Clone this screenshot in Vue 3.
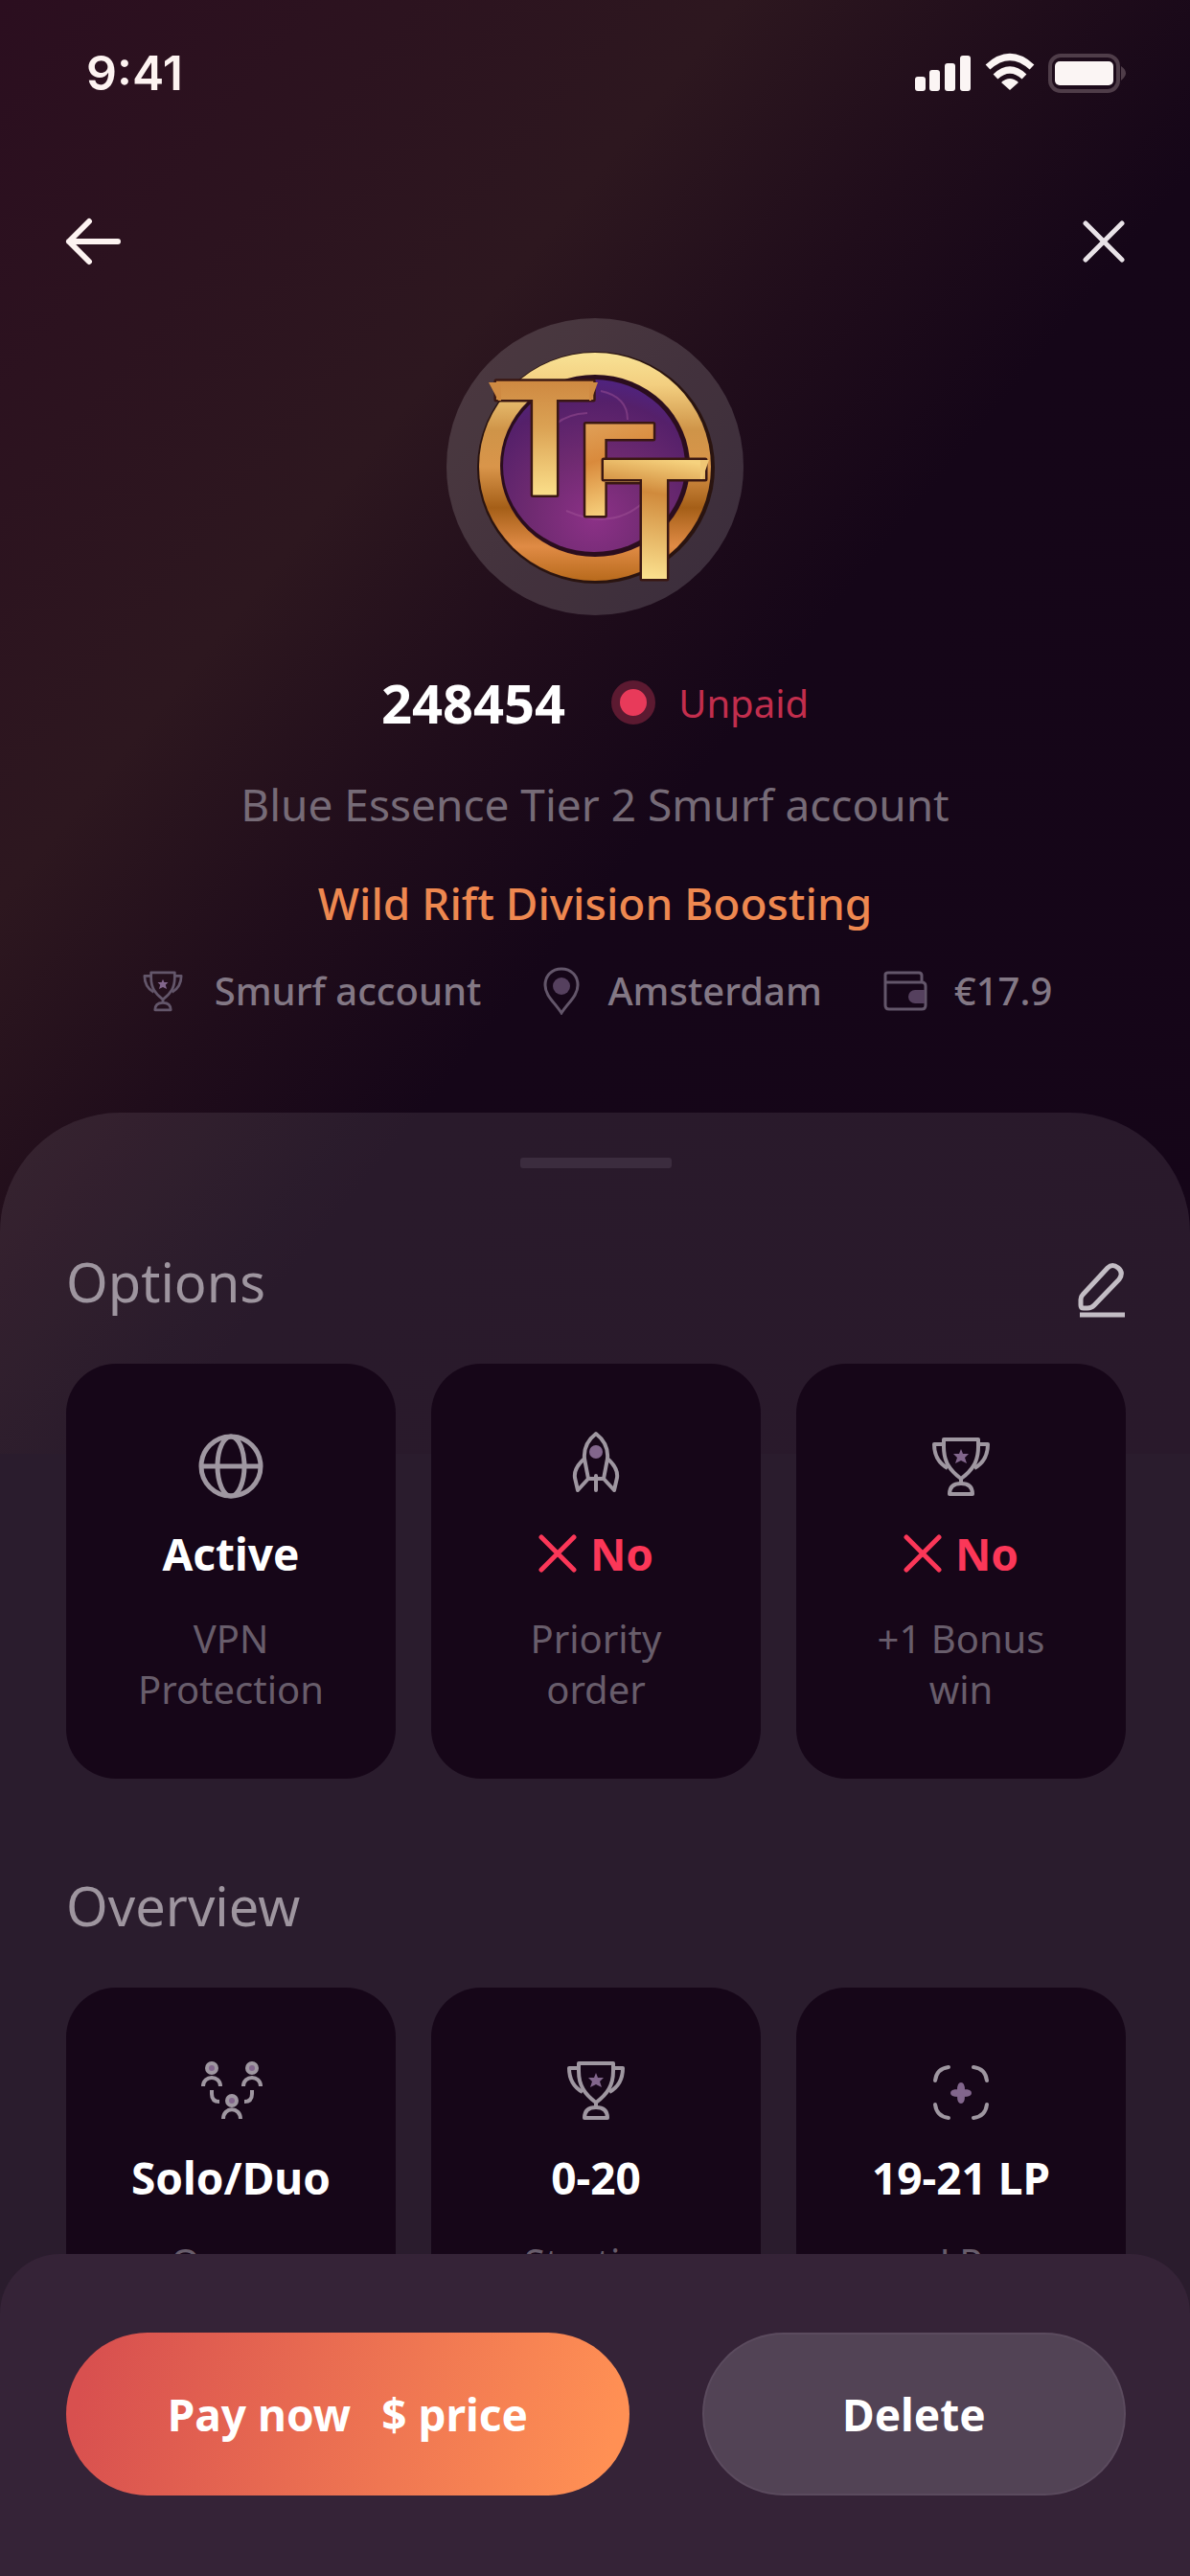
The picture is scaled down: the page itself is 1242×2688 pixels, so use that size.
<script setup>
const options = [
  { icon: 'globe', value: 'Active', label: 'VPN Protection' },
  { icon: 'rocket', value: 'No', label: 'Priority order', off: true },
  { icon: 'trophy', value: 'No', label: '+1 Bonus win', off: true },
]

const overview = [
  { icon: 'team', value: 'Solo/Duo', label: 'Queue' },
  { icon: 'trophy', value: '0-20', label: 'Starting' },
  { icon: 'target', value: '19-21 LP', label: 'LP' },
]

const sections = [
  { title: 'Options', cards: options, editable: true },
  { title: 'Overview', cards: overview },
]
</script>

<template>
  <div class="screen">
    <!-- shared icon shapes -->
    <svg class="defs" aria-hidden="true">
      <symbol id="globe" viewBox="0 0 76 76">
        <g fill="none" stroke="currentColor" stroke-width="5">
          <circle cx="38" cy="38" r="31" />
          <ellipse cx="38" cy="38" rx="14" ry="31" />
          <path d="M7 38h62" />
        </g>
      </symbol>
      <symbol id="rocket" viewBox="0 0 76 76">
        <g fill="none" stroke="currentColor" stroke-width="4" stroke-linejoin="round" stroke-linecap="round">
          <path d="M38 4C29 11 25 19 26 30l4 21h16l4-21C51 19 47 11 38 4z" />
          <path d="M26 30c-8 7-11 13-10 20l3 13 11-12" />
          <path d="M50 30c8 7 11 13 10 20l-3 13-11-12" />
          <path d="M38 48v15" />
        </g>
        <circle cx="38" cy="23" r="7" fill="#82668c" />
      </symbol>
      <symbol id="trophy" viewBox="0 0 76 76">
        <g fill="none" stroke="currentColor" stroke-width="4" stroke-linejoin="round">
          <path d="M20 10h36v8c0 15-6 24-18 33C26 42 20 33 20 18z" />
          <path d="M20 15H10c0 12 5 20 14 25" />
          <path d="M56 15h10c0 12-5 20-14 25" />
          <path d="M38 51v5" />
          <path d="M26 67c0-7 4-11 12-11s12 4 12 11z" />
        </g>
        <path d="M38 20l2 5 6 0-4 4 2 6-6-3-6 3 2-6-4-4 6 0z" fill="#82668c" />
      </symbol>
      <symbol id="team" viewBox="0 0 76 76">
        <g fill="#82668c" stroke="currentColor" stroke-width="4">
          <circle cx="18" cy="15" r="5" />
          <circle cx="60" cy="15" r="5" />
          <circle cx="39" cy="49" r="5" />
        </g>
        <g fill="none" stroke="currentColor" stroke-width="4">
          <path d="M9 34c0-12 18-12 18 0" />
          <path d="M51 34c0-12 18-12 18 0" />
          <path d="M30 68c0-13 18-13 18 0" />
          <path d="M18 38v4q0 8 8 8" />
          <path d="M60 38v4q0 8-8 8" />
        </g>
      </symbol>
      <symbol id="target" viewBox="0 0 76 76">
        <g fill="none" stroke="currentColor" stroke-width="4" stroke-linecap="round">
          <path d="M11 28c1-8 6-13 14-14" />
          <path d="M51 14c8 1 13 6 14 14" />
          <path d="M11 53c1 8 6 13 14 14" />
          <path d="M51 67c8-1 13-6 14-14" />
        </g>
        <path d="M38 31c2 0 3 2 3 7 5 0 7 1 7 3s-2 3-7 3c0 5-1 7-3 7s-3-2-3-7c-5 0-7-1-7-3s2-3 7-3c0-5 1-7 3-7z" fill="#82668c" stroke="#82668c" stroke-width="2" />
      </symbol>
    </svg>

    <main class="scroll">
      <div class="status-bar">
        <span class="time">9:41</span>
        <svg class="indicators" viewBox="0 0 224 42" aria-hidden="true">
          <g fill="#fbf5f4">
            <rect x="1" y="25" width="11" height="15" rx="3" />
            <rect x="16" y="18" width="11" height="22" rx="3" />
            <rect x="32" y="11" width="11" height="29" rx="3" />
            <rect x="48" y="3" width="11" height="37" rx="3" />
            <path d="M100 39l-9-8q9-8 18 0z" />
            <rect x="147" y="9" width="61" height="25" rx="5" />
          </g>
          <g fill="none" stroke="#fbf5f4" stroke-width="7">
            <path d="M77 15q23-21 46 0" />
            <path d="M85 25q15-14 30 0" />
          </g>
          <rect x="142" y="3" width="71" height="37" rx="11" fill="none" stroke="#4f3d49" stroke-width="4" />
          <path d="M216 14q10 7 0 15z" fill="#4f3d49" />
        </svg>
      </div>

      <nav class="nav">
        <button class="icon-button" type="button" aria-label="Back">
          <svg width="58" height="50" viewBox="0 0 58 50" fill="none" stroke="#fdf3f1" stroke-width="6" stroke-linejoin="round" stroke-linecap="round">
            <path d="M55 25H4M25 4L4 25l21 21" />
          </svg>
        </button>
        <button class="icon-button" type="button" aria-label="Close">
          <svg width="44" height="44" viewBox="0 0 44 44" fill="none" stroke="#e9e3e8" stroke-width="5" stroke-linecap="round">
            <path d="M3 3l38 38M41 3L3 41" />
          </svg>
        </button>
      </nav>

      <header class="summary">
        <svg class="avatar" viewBox="25 21 311 311" role="img" aria-label="TFT">
          <defs>
            <linearGradient id="ring" x1="0" y1="0" x2="0" y2="1">
              <stop offset="0" stop-color="#f8e295" />
              <stop offset=".14" stop-color="#f3cf80" />
              <stop offset=".34" stop-color="#cf9448" />
              <stop offset=".5" stop-color="#d9954a" />
              <stop offset=".68" stop-color="#a55f18" />
              <stop offset=".85" stop-color="#e08b45" />
              <stop offset="1" stop-color="#b86a1c" />
            </linearGradient>
            <radialGradient id="orb" cx=".5" cy=".8" r=".9">
              <stop offset="0" stop-color="#8c3187" />
              <stop offset=".4" stop-color="#6e2a70" />
              <stop offset=".75" stop-color="#55206a" />
              <stop offset="1" stop-color="#4a2590" />
            </radialGradient>
            <linearGradient id="gold-a" gradientUnits="userSpaceOnUse" x1="0" y1="88" x2="0" y2="206">
              <stop offset="0" stop-color="#cf8a42" />
              <stop offset=".4" stop-color="#dba254" />
              <stop offset="1" stop-color="#fbdf8a" />
            </linearGradient>
            <linearGradient id="gold-b" gradientUnits="userSpaceOnUse" x1="172" y1="131" x2="200" y2="227">
              <stop offset="0" stop-color="#e0a058" />
              <stop offset=".4" stop-color="#d98a3c" />
              <stop offset="1" stop-color="#f8d480" />
            </linearGradient>
            <linearGradient id="gold-c" gradientUnits="userSpaceOnUse" x1="260" y1="168" x2="240" y2="293">
              <stop offset="0" stop-color="#f6d27e" />
              <stop offset=".3" stop-color="#d08a3c" />
              <stop offset="1" stop-color="#fbe08e" />
            </linearGradient>
          </defs>
          <circle cx="180" cy="176" r="155" fill="#fff" fill-opacity=".15" />
          <ellipse cx="181" cy="177" rx="124" ry="121" fill="#2a1410" />
          <ellipse cx="180" cy="176" rx="121" ry="119" fill="url(#ring)" />
          <ellipse cx="180" cy="175" rx="99" ry="95" fill="#2b0d1e" />
          <ellipse cx="179" cy="175" rx="95" ry="90" fill="url(#orb)" />
          <g fill="none" stroke="#a4569a" stroke-width="2" opacity=".45">
            <path d="M186 97q28 6 28 30" />
            <path d="M122 160q10-38 50-40" />
            <path d="M150 222q50 22 84-12" />
          </g>
          <text class="mark" stroke="#3a1712" stroke-width="5" stroke-linejoin="round" paint-order="stroke"><tspan x="75" y="206" font-size="172" fill="url(#gold-a)">T</tspan><tspan x="161" y="227" font-size="139" fill="url(#gold-b)">F</tspan><tspan x="187" y="293" font-size="180" fill="url(#gold-c)">T</tspan></text>
          <path d="M69 88h13v19h-3z" fill="#cf8a42" />
          <path d="M174 88h9l-7 19h-2z" fill="#cf8a42" />
          <path d="M290 169h9l-7 20h-2z" fill="#f0c674" />
        </svg>

        <div class="order">
          <h1 class="order-id">248454</h1>
          <span class="state"><i class="state-dot"></i>Unpaid</span>
        </div>
        <p class="product">Blue Essence Tier 2 Smurf account</p>
        <p class="service">Wild Rift Division Boosting</p>

        <ul class="meta">
          <li>
            <svg width="52" height="52"><use href="#trophy" /></svg>
            Smurf account
          </li>
          <li>
            <svg width="40" height="50" viewBox="0 0 40 50">
              <path d="M20 2C10 2 3 9 3 19c0 11 10 18 17 29 7-11 17-18 17-29C37 9 30 2 20 2z" fill="none" stroke="currentColor" stroke-width="3" />
              <circle cx="20" cy="20" r="9" fill="#55405e" />
            </svg>
            Amsterdam
          </li>
          <li>
            <svg width="46" height="42" viewBox="0 0 46 42">
              <g fill="none" stroke="currentColor" stroke-width="3" stroke-linejoin="round">
                <path d="M2 4q0-2 3-2h32q3 0 3 3v7H2zM2 12v24q0 4 4 4h34q4 0 4-4V16q0-4-4-4" />
              </g>
              <path d="M43 20v14H33a7 7 0 010-14z" fill="#55405e" />
            </svg>
            €17.9
          </li>
        </ul>
      </header>

      <div class="sheet">
        <div class="handle"></div>
        <section v-for="section in sections" :key="section.title" class="section">
          <div class="section-head">
            <h2>{{ section.title }}</h2>
            <button v-if="section.editable" class="icon-button" type="button" aria-label="Edit options">
              <svg width="50" height="58" viewBox="0 0 50 58" fill="none" stroke="#c3bdc5" stroke-width="5" stroke-linejoin="round">
                <path d="M5 34L31 6q5-5 11 0t1 12L17 45q-3 3-7 3H6q-3 0-3-3v-6q0-3 2-5z" />
                <path d="M2 55h47" />
              </svg>
            </button>
          </div>
          <div class="cards">
            <article v-for="card in section.cards" :key="card.label" class="card">
              <svg class="card-icon"><use :href="'#' + card.icon" /></svg>
              <h3 :class="{ off: card.off }">
                <svg v-if="card.off" width="40" height="40" viewBox="0 0 40 40" fill="none" stroke="currentColor" stroke-width="5" stroke-linecap="round" aria-hidden="true">
                  <path d="M3 3l34 34M37 3L3 37" />
                </svg>
                {{ card.value }}
              </h3>
              <p>{{ card.label }}</p>
            </article>
          </div>
        </section>
      </div>
    </main>

    <footer class="actions">
      <button class="pay" type="button"><span>Pay now</span><span>$ price</span></button>
      <button class="delete" type="button">Delete</button>
    </footer>
  </div>
</template>

<style>
body {
  margin: 0;
  background: #16081a;
}
</style>

<style scoped>
.screen {
  display: flex;
  flex-direction: column;
  height: 100vh;
  font-family: "Noto Sans", sans-serif;
  color: #fff;
  background:
    linear-gradient(to bottom right, #2b0e1f 0%, #2d171f 31%, #200d1b 44%, #150618 56%, #150518 100%) no-repeat 0 0 / 100% 1517px,
    #16081a;
}

.defs {
  position: absolute;
  width: 0;
  height: 0;
}

.scroll {
  flex: 1;
  min-height: 0;
  display: flex;
  flex-direction: column;
  overflow-x: hidden;
  overflow-y: auto;
  scrollbar-width: none;
}

h1, h2, h3, p, ul {
  margin: 0;
  padding: 0;
}

button {
  border: 0;
  padding: 0;
  font: inherit;
  color: inherit;
  background: none;
  cursor: pointer;
}

.icon-button svg {
  display: block;
}

.status-bar {
  flex: none;
  display: flex;
  align-items: center;
  justify-content: space-between;
  height: 152px;
  padding: 0 64px 0 90px;
}

.time {
  font: 600 50px Inter, sans-serif;
  color: #fdf3f1;
}

.indicators {
  width: 224px;
  height: 42px;
}

.nav {
  flex: none;
  display: flex;
  align-items: center;
  justify-content: space-between;
  height: 64px;
  margin-top: 68px;
  padding: 0 68px;
}

.summary {
  flex: none;
  display: flex;
  flex-direction: column;
  align-items: center;
  padding: 48px 68px 99px;
}

.avatar {
  width: 311px;
  height: 311px;
}

.mark {
  font-family: "Liberation Sans", sans-serif;
  font-weight: 700;
}

.order {
  display: flex;
  align-items: center;
  gap: 48px;
  height: 80px;
  margin-top: 50px;
}

.order-id {
  font-size: 56px;
  font-weight: 700;
  line-height: 80px;
}

.state {
  display: flex;
  align-items: center;
  gap: 24px;
  font-size: 40px;
  color: #c22e4d;
}

.state-dot {
  width: 28px;
  height: 28px;
  border: 9px solid #5c1a31;
  border-radius: 50%;
  background: #e83a5a;
}

.product,
.service {
  font-size: 46px;
  line-height: 64px;
}

.product {
  margin-top: 34px;
  color: #766b77;
}

.service {
  margin-top: 39px;
  font-weight: 500;
  color: #ee8850;
}

.meta {
  display: flex;
  gap: 64px;
  margin-top: 32px;
  list-style: none;
  font-size: 40px;
  font-weight: 500;
  line-height: 56px;
  color: #837885;
}

.meta li {
  display: flex;
  align-items: center;
  gap: 28px;
}

.meta svg {
  color: #63566a;
}

.sheet {
  flex: 1 0 auto;
  padding: 47px 67px 0 69px;
  border-radius: 125px 125px 0 0;
  background: rgba(248, 235, 240, 0.09);
}

.handle {
  width: 158px;
  height: 11px;
  margin: 0 auto 80px;
  border-radius: 3px;
  background: #3b2c3e;
}

.section {
  margin-bottom: 94px;
}

.section-head {
  display: flex;
  align-items: flex-end;
  justify-content: space-between;
  margin-bottom: 48px;
}

.section-head h2 {
  font-size: 56px;
  font-weight: 400;
  line-height: 76px;
  color: #9e959f;
}

.cards {
  display: grid;
  grid-template-columns: repeat(3, 1fr);
  gap: 37px;
}

.card {
  display: flex;
  flex-direction: column;
  align-items: center;
  box-sizing: border-box;
  min-height: 433px;
  padding: 69px 60px 67px;
  border-radius: 52px;
  background: #160618;
  text-align: center;
}

.card-icon {
  width: 76px;
  height: 76px;
  color: #9f97a1;
}

.card h3 {
  display: flex;
  align-items: center;
  gap: 14px;
  margin-top: 21px;
  font-size: 46px;
  font-weight: 700;
  line-height: 64px;
  white-space: nowrap;
}

.card h3.off {
  color: #fb3758;
}

.card p {
  margin-top: 30px;
  font-size: 40px;
  line-height: 53px;
  color: #685d6b;
}

.actions {
  position: relative;
  flex: none;
  display: flex;
  gap: 76px;
  margin-top: -60px;
  padding: 82px 67px 84px 69px;
  border-radius: 62px 62px 0 0;
  background: #352337;
  font-size: 46px;
  font-weight: 700;
}

.actions button {
  height: 170px;
  border-radius: 85px;
}

.actions .pay {
  flex: 590;
  display: flex;
  align-items: center;
  justify-content: center;
  gap: 32px;
  background: linear-gradient(105deg, #d8504f 5%, #ff9054 95%);
}

.actions .delete {
  flex: 440;
  border: 2px solid #5b4b5e;
  background: #524355;
}
</style>
